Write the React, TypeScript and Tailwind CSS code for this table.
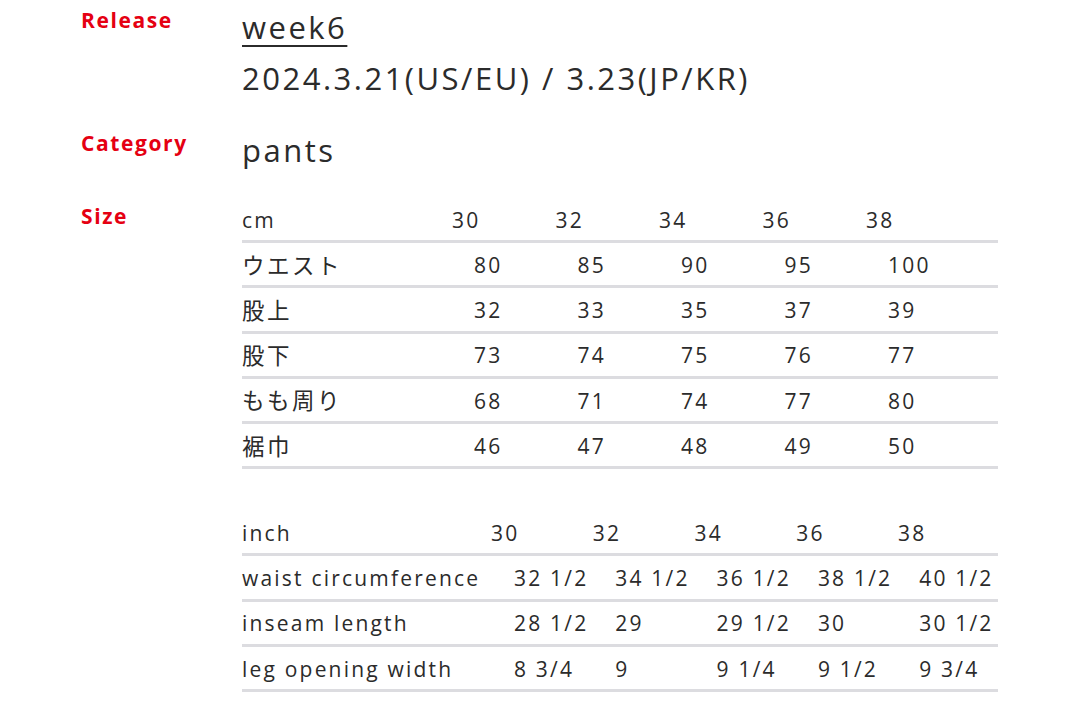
import React from "react";

const font = { fontFamily: '"Open Sans", "Noto Sans CJK JP", sans-serif' };

const cmHeaders = ["30", "32", "34", "36", "38"];
const cmRows: [string, string[]][] = [
  ["ウエスト", ["80", "85", "90", "95", "100"]],
  ["股上", ["32", "33", "35", "37", "39"]],
  ["股下", ["73", "74", "75", "76", "77"]],
  ["もも周り", ["68", "71", "74", "77", "80"]],
  ["裾巾", ["46", "47", "48", "49", "50"]],
];

const inRows: [string, string[]][] = [
  ["waist circumference", ["32 1/2", "34 1/2", "36 1/2", "38 1/2", "40 1/2"]],
  ["inseam length", ["28 1/2", "29", "29 1/2", "30", "30 1/2"]],
  ["leg opening width", ["8 3/4", "9", "9 1/4", "9 1/2", "9 3/4"]],
];

function Label({ children }: { children: React.ReactNode }) {
  return (
    <div className="text-[21px] font-bold leading-[36px] tracking-[1.6px] text-[#e50012]">
      {children}
    </div>
  );
}

const rowCls =
  "grid h-[45.2px] items-center border-b-[3px] border-[#dcdce0] text-[21px] tracking-[2.2px] text-[#2b2b2b] whitespace-nowrap";

export default function App() {
  return (
    <div className="min-h-[725px] w-[1080px] bg-white pl-[81px] pt-[2px]" style={font}>
      <div className="grid grid-cols-[161px_770px]">
        <Label>Release</Label>
        <div className="text-[31px] tracking-[2.5px] text-[#2b2b2b]">
          <div className="leading-[50px]">
            <span className="underline decoration-[2px] underline-offset-[6px]">week6</span>
          </div>
          <div className="leading-[52px]">2024.3.21(US/EU) / 3.23(JP/KR)</div>
        </div>
      </div>

      <div className="mt-[21px] grid grid-cols-[161px_756px]">
        <Label>Category</Label>
        <div className="text-[31px] leading-[50px] tracking-[2.5px] text-[#2b2b2b]">pants</div>
      </div>

      <div className="mt-[23px] grid grid-cols-[161px_756px]">
        <Label>Size</Label>
        <div>
          <div className={`${rowCls} grid-cols-[210px_repeat(4,103.5px)_1fr] pt-[4px]`}>
            <div>cm</div>
            {cmHeaders.map((h) => (
              <div key={h}>{h}</div>
            ))}
          </div>
          {cmRows.map(([label, vals]) => (
            <div key={label} className={`${rowCls} grid-cols-[232px_repeat(4,103.5px)_1fr] pt-[3px]`}>
              <div className="text-[22.5px] tracking-[2.5px]">{label}</div>
              {vals.map((v, i) => (
                <div key={i}>{v}</div>
              ))}
            </div>
          ))}

          <div className={`${rowCls} mt-[42px] grid-cols-[249px_repeat(4,101.75px)_1fr] pt-[4px]`}>
            <div>inch</div>
            {cmHeaders.map((h) => (
              <div key={h}>{h}</div>
            ))}
          </div>
          {inRows.map(([label, vals]) => (
            <div key={label} className={`${rowCls} grid-cols-[272px_repeat(4,101.3px)_1fr] pt-[3px]`}>
              <div>{label}</div>
              {vals.map((v, i) => (
                <div key={i}>{v}</div>
              ))}
            </div>
          ))}
        </div>
      </div>
    </div>
  );
}
